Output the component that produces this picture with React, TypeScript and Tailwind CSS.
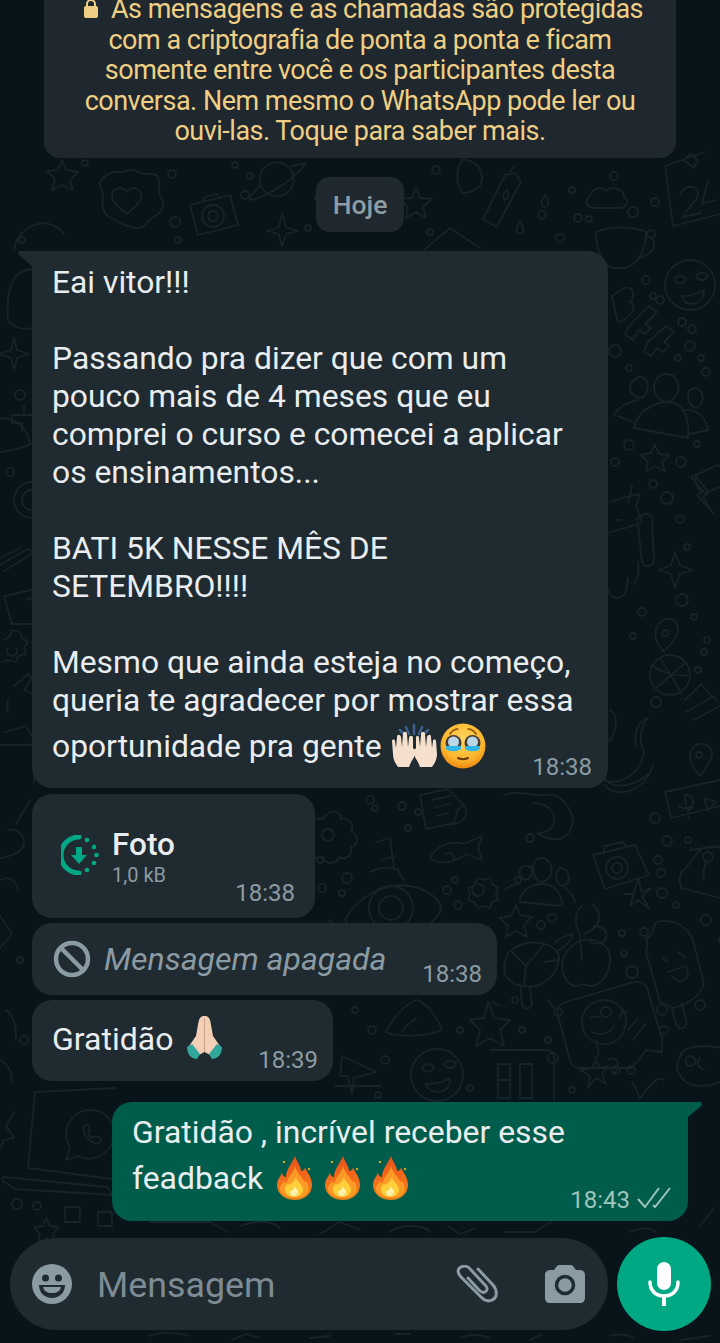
import React from "react";

const SANS = "font-['Roboto','Liberation_Sans',sans-serif]";

// small loose circles scattered between the doodles
const DOTS: [number, number, number][] = [
  [614, 176, 4], [655, 202, 4], [633, 212, 5], [651, 234, 4], [660, 300, 4], [646, 280, 4], [653, 296, 3],
  [682, 322, 4], [692, 329, 4], [690, 346, 5], [678, 358, 3], [701, 358, 3], [706, 372, 4], [629, 368, 3],
  [615, 351, 6], [629, 445, 5], [615, 462, 4], [681, 462, 5], [697, 444, 3], [653, 484, 4], [667, 498, 6],
  [680, 519, 4], [687, 547, 3], [642, 612, 4], [682, 600, 6], [694, 617, 3], [707, 640, 3], [633, 636, 3],
  [656, 702, 5], [704, 652, 3], [698, 670, 3], [655, 818, 5], [667, 841, 5], [688, 840, 3], [658, 860, 4],
  [661, 873, 4], [662, 893, 5], [676, 905, 3], [706, 920, 5], [722, 940, 3], [530, 838, 4], [552, 918, 4],
  [541, 925, 4], [622, 933, 3], [644, 932, 4], [624, 953, 3], [632, 972, 6], [662, 1010, 5], [664, 1030, 4],
  [700, 1005, 5], [558, 1012, 4], [522, 1030, 3], [548, 1040, 3], [553, 1058, 5], [616, 1070, 4], [631, 1070, 4],
  [572, 1090, 3], [22, 240, 3], [20, 395, 5], [10, 472, 4], [85, 163, 3], [172, 174, 4], [175, 222, 5],
  [178, 240, 3], [250, 176, 3], [245, 195, 4], [235, 165, 3], [318, 198, 3], [308, 228, 3], [430, 232, 3],
  [436, 170, 4], [542, 215, 4], [572, 190, 3], [578, 218, 4], [589, 219, 3], [560, 238, 4], [370, 800, 4],
  [375, 808, 3], [408, 828, 3], [402, 806, 4], [418, 812, 3], [322, 888, 4], [347, 878, 5], [342, 893, 3],
  [447, 890, 4], [455, 880, 3], [458, 905, 4], [518, 880, 3], [320, 860, 3], [372, 1030, 4], [385, 1060, 4],
  [460, 1030, 3], [515, 1000, 3], [470, 1088, 3], [24, 1040, 4], [20, 960, 3], [355, 1010, 3], [378, 1095, 3],
  [17, 1204, 5], [37, 1206, 4],
];

// doodle wallpaper, very faint strokes behind the chat
function Wallpaper() {
  return (
    <svg className="absolute inset-0 blur-[0.4px]" width="720" height="1343" viewBox="0 0 720 1343" fill="none" stroke="#182329" strokeWidth="1.8" strokeLinecap="round" strokeLinejoin="round">
      {DOTS.map(([cx, cy, r], i) => (
        <circle key={i} cx={cx} cy={cy} r={r} />
      ))}
      {/* top row */}
      <path d="M125 172c8-6 14 2 20 2s12-2 14 6-2 12 2 18 2 14-6 18-8 12-16 12-14-2-20-6-14-4-16-14 2-12-2-20 6-14 12-16z" />
      <path d="M127 192c6-8 16-2 14 6-1 6-8 10-14 16-6-6-14-10-15-16-1-8 9-14 15-6z" />
      <path d="M62 160l4 10 12 2-8 8 3 10-11-5-10 5 3-11-8-8 11-1z" />
      <path d="M264 168a17 17 0 1 1 24 24 17 17 0 0 1-24-24zM250 200c16-2 44-20 56-37-14 3-14 3-14 3M250 200c-2-2 6-10 10-14" />
      <path d="M190 205l40-10 8 30-40 10zM203 201l2-4 12-3 3 4" />
      <circle cx="213" cy="216" r="11" />
      <circle cx="213" cy="216" r="5" />
      <path d="M282 213l4 14 12 4-12 3-4 12-3-12-12-3 12-4z" />
      <path d="M416 187l4 11 12 1-9 8 3 11-10-6-10 6 2-11-8-8 12-1z" />
      <path d="M462 160a18 18 0 0 1 20 18c0 10-10 15-20 15-6-10-6-22 0-33z" />
      <path d="M505 175l10-2 6 8-24 46-14-8zM510 172l4-6" />
      <path d="M507 190c3 4 2 8-2 10-3-3-2-7 2-10z" />
      <path d="M590 196c2-8 12-10 16-5 6-6 18-2 18 6 6 4 2 12-6 11h-24c-8-1-10-8-4-12z" />
      <path d="M545 195c4 5 5 10 0 12-5-2-4-7 0-12zM520 222c4 5 5 10 0 12-5-2-4-7 0-12z" />
      <path d="M596 232c14-6 36-6 50 0 0 16-6 30-20 36h-14c-12-6-16-22-16-36zM646 238c8-4 10 6 6 12s-10 6-12 8" />
      <path d="M424 250l26-22 30 20" />
      <path d="M665 166l40-14M684 160l6-6 8 6-4 8zM665 166l8 60M673 226l47-12M680 195c4-12 20-10 18 0-1 6-10 12-15 22l18-4M708 180l-6 24 14-4" />
      <path d="M14 250c4-26 36-36 50-16" />
      {/* right column */}
      <circle cx="690" cy="285" r="25" />
      <path d="M674 280c2-5 9-5 12-1-2 5-8 7-12 1zM696 276c3-4 8-4 12-1-1 5-8 8-12 1zM682 296c8 0 16-2 22-6 0 8-4 14-12 14-6 0-10-4-10-8z" />
      <path d="M612 296l12-8c6-2 10 2 9 8 0 4-2 5-4 6 4 0 6 4 4 8-1 4-6 8-12 12l-4-2z" />
      <path d="M629 326l20-20 8 6-12 12 6 4-6 6-6-4-6 10-8-6zM648 342l18-16 8 6-10 10 5 4-6 6-6-4-6 8-7-4z" />
      <path d="M634 380c6-6 14-2 14 6 0 5-3 10-6 12-6 0-12-4-12-10 0-3 2-6 4-8zM666 374c10 0 14 8 12 18-2 6-8 10-12 10-8-2-12-8-12-16 0-6 6-12 12-12zM696 388c6 2 8 8 6 14-2 4-4 6-6 6-6-2-8-8-8-12 0-6 4-8 8-8z" />
      <path d="M634 428c2-14 18-26 34-26 16 0 22 18 20 36zM634 428l54 10M614 416c2-8 14-14 24-16M618 416l14 6M684 410c10-2 22 6 24 20l-18 4" />
      <path d="M655 445l4 9 10 1-7 7 3 9-10-5-9 5 2-9-7-7 10-2z" />
      <path d="M696 475l22-10 8 8M697 475c-4 8 0 14 8 18l20-8" />
      <path d="M610 502l20-6 10-2-4 12 6 16-16 6-16 4M632 486l-4 16M617 520h4M636 520l8-6c6-2 10 4 8 12l2 32c0 8-8 12-12 4l-4-36" />
      <path d="M608 590c2 10 14 10 18 2l2-14M634 584c4-4 6-14 4-22" />
      <path d="M675 552l5 13 12 5-12 4-5 14-4-14-12-4 12-5z" />
      <path d="M664 620c8-4 14 2 14 10s-8 14-14 22c-6-6-10-14-8-22 0-4 4-8 8-10z" />
      <circle cx="665" cy="633" r="3" />
      <path d="M695 475l14 18-6 4 10 16-16-18 6-4-12-14z" />
      {/* lower right */}
      <circle cx="670" cy="675" r="20" />
      <path d="M652 665c10 8 26 12 36 10M660 658l22 36M656 688l28-24" />
      <path d="M685 700l16-16 10 12 6 4M686 712l28-16M694 720l26-14" />
      <path d="M698 744c8-2 14 4 14 10 0 6-6 14-12 22-6-6-10-14-10-20 0-6 4-10 8-12z" />
      <circle cx="699" cy="755" r="3" />
      <path d="M665 792l55-12M665 792l6 26 49-12M685 795c6-2 8 4 8 10 0 5-6 6-7 2zM678 804c2 6 14 6 16-2M688 812l1 6M704 798l12 4-8 8z" />
      <path d="M610 710c10 6 6 26-4 34M606 744c-16 8-20 24-6 34 14 10 40 0 44-26M644 752c-4-8-6-22 4-34-12 4-14 18-12 28M604 778c10 14 34 6 44-4M605 785c10 14 40 8 48-20" />
      <path d="M504 795c18-6 28 2 40 0 14-2 22 6 28 20 4 14-8 24-14 24-8 0-14 0-20-6 8 0 14-4 16-10 2-10-6-20-20-20" />
      <path d="M593 855l42-10 14 30-44 14zM603 854l2-8 18-4 4 6" />
      <circle cx="617" cy="868" r="11" />
      <circle cx="617" cy="868" r="5" />
      <path d="M520 870c2-6 12-6 12 2 0 5-4 8-6 8-4 0-8-6-6-10zM541 858c8 0 12 8 10 16-1 4-6 8-10 8-6-2-8-8-8-14 0-6 4-10 8-10zM562 868c6 2 8 8 6 14-2 3-4 4-6 4-4-2-6-6-6-10s2-8 6-8z" />
      <path d="M520 902c0-10 10-18 22-18 12 0 20 8 20 22zM505 890c4-4 8-6 14-6M565 888c4 2 8 8 10 14" />
      <path d="M633 894l6-16 2 14 10-4-9 8 7 12-11-8-8 6 4-12-10 0z" />
      <path d="M690 850l30-4M681 872c6-2 14-20 22-24 6-2 12-2 17 0M681 888l39 10M682 888c-4-6-2-12 0-16M706 862c-3 8-3 14-2 18" />
      <circle cx="708" cy="857" r="5" />
      <path d="M582 960c-2-12 0-22-4-30-4-8-2-20 4-24M592 904c8 6 10 16 2 24-2 2-6 4-10 6M594 926c8 0 14 4 12 12-2 4-6 8-16 4" />
      <path d="M582 940c14-2 30 4 28 22-2 14-10 24-20 24-8-2-8-2-14 0-6 0-14-8-14-20 0-10 8-22 20-26z" />
      <path d="M509 952c8-8 24-12 36-8 8 2 14 8 14 14 0 10-10 26-24 28-14 2-26-2-30-12-2-6 0-16 4-22zM512 952l14 14 18-22M526 966l-2 20M544 962l14-2M555 942c4-4 10-6 18-8-2 6-6 12-14 16M520 984l2 20c0 6 10 6 10 0l-2-18M500 1006l-8-4M548 1000l6 8" />
      <path d="M656 922c16-4 34 4 38 22l10 40c-4 12-16 20-30 24l-14-6-14-50c2-6 2-10 0-14 4 0 6-4 10-16zM672 1008l4 16c4 8 12 4 10-4l-4-16" />
      <path d="M662 958l6 4M678 952l8 6M668 972c6-2 12-4 18-6l2 8c0 6-8 8-12 6l-4-4" />
      <path d="M566 1002l68-20c8-2 14 4 14 10l14 46 0 14-16-2-14 18-50 0c-8 0-10-2-12-8l-12-44c-2-8 2-12 8-14z" />
      <circle cx="604" cy="1022" r="22" />
      <path d="M590 1018c4-2 8-2 10 0M592 1032c8 4 18 2 22-6M621 1018c-2-6 2-8 6-6" />
      <circle cx="606" cy="1012" r="5" />
      <path d="M633 1040l12-16M628 1030l10-12" />
      <path d="M490 1050h56c6 0 8 4 8 8v42M498 1064v34M510 1064v34M498 1080h12M498 1064h12M498 1098h12M520 1064h12v34h-12z" />
      <path d="M596 1040c0 8 6 12 0 18" />
      <path d="M596 1060l-4 8-12 2 10 6-2 12 8-10 10 6-4-10 6-8-8 2z" />
      <path d="M680 1054c8-8 24-10 40-6M682 1054c-8 10-6 20 4 28 10 6 24 4 34 0M704 1070c-6-2-8-8-4-12M690 1066a5 5 0 1 1 1 0" />
      <path d="M608 1060c6-4 10 0 10 4 0 4-2 8-4 10M640 1098c12-16 18-22 24-18M632 1082c4 6 6 12 8 16" />
      {/* middle, next to the short bubbles */}
      <path d="M327 815c4-6 14-4 14 4 8-2 14 6 10 12 8 4 8 14 0 16 2 8-6 14-12 10-2 8-14 8-16 0-8 4-14-4-12-10-8-2-8-14 0-16-4-8 4-14 12-12 0-2 2-4 4-4z" />
      <circle cx="328" cy="835" r="6" />
      <path d="M420 795l28-6 16 16-6 4-4 14-28 6zM432 800l18-4M434 808l16-4M436 816l12-3M464 805c4 6 2 16-6 18l-8 2" />
      <path d="M430 858c6-12 20-18 34-14l18-8-4 12 4 12-16-6c-10 8-26 12-36 4zM446 854c4-2 8 0 8 4" />
      <path d="M376 842l14-4 4 30M382 860l14-4M370 872c6-4 20-6 28-2l6 10M346 918c12-22 40-36 64-32 22 4 34 18 30 26-10 18-46 36-70 32-16-4-26-14-24-26z" />
      <circle cx="391" cy="908" r="22" />
      <circle cx="391" cy="908" r="12" />
      <path d="M331 938l8 12 8-8M329 920l10 10" />
      <path d="M478 878l6 2 6-2 2 6 6 4-2 6 2 6-6 2-2 6-6-2-6 2-4-6-6-2 2-6-2-6 6-2z" />
      <circle cx="478" cy="890" r="6" />
      <path d="M516 905l4 10 12 2-8 8 3 12-11-6-10 6 2-11-8-8 11-2z" />
      <path d="M386 1032c8-16 20-28 30-32 10 2 22 18 26 30-12 6-44 8-56 2zM402 1032c4-8 8-8 14-14" />
      <path d="M342 1056l34 16-22 6-2 16-4-18-8 0z" />
      <circle cx="437" cy="1075" r="26" />
      <path d="M422 1068c2-5 9-5 12-1-2 5-8 7-12 1zM444 1064c3-4 8-4 12-1-1 5-8 8-12 1zM426 1084c8 0 18-2 24-6 0 8-4 14-12 14-6 0-12-4-12-8z" />
      <path d="M488 1002l6 16 16 2-10 10 4 16-14-8-14 8 4-16-10-10 14-2z" />
      <path d="M335 1086h46" />
      {/* left column */}
      <path d="M18 275c6-6 18-8 24-4M8 320c-2-20 2-40 10-46M8 320c4 8 16 10 26 8" />
      <path d="M14 338l3 12 12 4-12 4-3 12-3-12-12-4 12-4z" />
      <path d="M24 405v10h8M24 415H12v8h10v8" />
      <path d="M0 452c14-2 24-4 30-8-2-14-12-26-30-26" />
      <circle cx="32" cy="500" r="18" />
      <circle cx="32" cy="500" r="10" />
      <path d="M0 565l24-14c6-4 8 0 6 4l-26 16M0 558l20-10" />
      <path d="M4 596l28-6M4 596l8 28h20M26 600c10-4 10 0 10 6" />
      <path d="M4 640l6-4 2-6 8 2 2 6 6 4-4 6 2 6-8 2-2 6-8-2-6 2M8 648a5 5 0 1 0 8 0" />
      <path d="M14 686l14-12 4 4-8 12 8 4" />
      <path d="M4 732l22-6 8 14v44M0 745h32M8 700c-2 6 0 10 0 12" />
      <path d="M30 800l-14 24M8 830c10-2 16 6 16 12 0 8-10 14-24 16" />
      <path d="M0 880c10-4 16 0 18 10M0 916l12 18-12 14M6 1010c10 8 10 18 10 30M0 1060c8 4 12 12 12 22" />
      {/* bottom left: laptop with the WhatsApp mark on the screen */}
      <path d="M35 1092l-7 76 92 12M35 1092l80-4M3 1177l104 10 6 8-98-6-12-8z" />
      <path d="M90 1110c-14 0-24 12-24 24 0 6 2 10 4 14l-4 12 12-4c16 8 36-4 36-22 0-14-10-24-24-24zM84 1126c-2 6 2 14 12 18 4 0 6-4 4-6l-6-2-2 2c-2-2-4-4-4-6l2-2-2-6z" />
      <path d="M14 1112l-8 14 8 12-10 2-4 8" />
      <path d="M65 1207h15v15H65zM98 1212h14v14H98zM46 1218l4 8 9 1-6 7 2 9-9-4-8 4 2-9-6-7 9-1z" />
      <path d="M150 1222h60l18 10M240 1226c20-6 30-6 40 2M320 1234l20-12 20 8M390 1232c10-8 34-8 40 0M448 1226l12 8 16-6M505 1232h30l16-10M630 1232c10-4 20-6 26 0M700 1226l14-18" />
      <path d="M150 1336c10-4 24-4 40 0M232 1340l14-6 14 4M310 1338l20-2M396 1334h14M460 1338c10-4 18-4 30 0M530 1340l12-6M610 1336c6-2 16-2 24 2M680 1340l30-4" />
    </svg>
  );
}

function IncomingTail() {
  return (
    <svg className="absolute left-[-14px] top-0" width="20" height="20" viewBox="0 0 20 20">
      <path d="M20 0H3C0 0-1 2 1 4l19 16z" fill="#1f2a31" />
    </svg>
  );
}

function OutgoingTail() {
  return (
    <svg className="absolute right-[-14px] top-0" width="20" height="20" viewBox="0 0 20 20">
      <path d="M0 0h17c3 0 4 2 2 4L0 20z" fill="#005c4b" />
    </svg>
  );
}

function RaisedHands() {
  return (
    <svg width="48" height="44" viewBox="0 0 48 44">
      <path d="M24 1v9M16 3l3 7M32 3l-3 7M10 6l5 5M38 6l-5 5" stroke="#3c5f8c" strokeWidth="2.500" strokeLinecap="round" />
      <path d="M2 17c0-2 3-2 3 0l1 7 1-11c0-3 3-3 4 0l1 10 1-13c0-3 4-3 4 0l1 13 1-9c0-3 4-3 4 0l0 13 2-2c2-2 3 0 2 2l-4 8c-2 3-3 5-4 8H8c-3-4-5-8-5-13z" fill="#f4e0cc" />
      <path d="M46 17c0-2-3-2-3 0l-1 7-1-11c0-3-3-3-4 0l-1 10-1-13c0-3-4-3-4 0l-1 13-1-9c0-3-3-3-3 0l0 13-2-2c-1-2-3 0-2 2l4 8c2 3 3 5 4 8h12c3-4 5-8 5-13z" fill="#f4e0cc" />
    </svg>
  );
}

function TearsFace() {
  return (
    <svg width="46" height="46" viewBox="0 0 46 46">
      <defs>
        <radialGradient id="face" cx="50%" cy="35%" r="65%">
          <stop offset="0%" stopColor="#ffd75e" />
          <stop offset="70%" stopColor="#fbb62d" />
          <stop offset="100%" stopColor="#ec8a12" />
        </radialGradient>
      </defs>
      <circle cx="23" cy="23" r="22.500" fill="url(#face)" />
      <path d="M10 11c2-3 5-5 8-5M36 11c-2-3-5-5-8-5" stroke="#8a4e12" strokeWidth="1.600" fill="none" strokeLinecap="round" />
      <circle cx="13.500" cy="20" r="8" fill="#4a3a34" />
      <circle cx="32.500" cy="20" r="8" fill="#4a3a34" />
      <circle cx="13.500" cy="19" r="5.500" fill="#b9d6e4" />
      <circle cx="32.500" cy="19" r="5.500" fill="#b9d6e4" />
      <path d="M6 23h15v3c-4 3-11 3-15 0zM25 23h15v3c-4 3-11 3-15 0z" fill="#2fb6e8" />
      <path d="M18 35c3 1.500 7 1.500 10 0" stroke="#6b3d10" strokeWidth="2" fill="none" strokeLinecap="round" />
    </svg>
  );
}

function Praying() {
  return (
    <svg width="35" height="43" viewBox="0 0 35 43">
      <path d="M17.500 0c3.500 0 5.500 2 6 6L26 20l7 10-8 10-7.500-4L10 40 2 30l7-10 2.500-14c.5-4 2.500-6 6-6z" fill="#f3cfb6" />
      <path d="M17.500 2v34" stroke="#c9a08a" strokeWidth="1" />
      <path d="M0 31l5-3 8 10-3 5C4 43 0 38 0 31zM35 31l-5-3-8 10 3 5c6 0 10-5 10-12z" fill="#2fa79a" />
    </svg>
  );
}

function Fire() {
  return (
    <svg width="35" height="44" viewBox="0 0 35 44">
      <defs>
        <linearGradient id="flame" x1="0" y1="0" x2="0" y2="1">
          <stop offset="0%" stopColor="#e8501c" />
          <stop offset="60%" stopColor="#f5701c" />
          <stop offset="100%" stopColor="#e2811a" />
        </linearGradient>
      </defs>
      <path d="M18 0c2 6 6 10 6 15 2 0 3-1 4-3 3 5 7 10 7 17 0 9-8 15-17 15C8 44 0 38 0 29c0-5 3-8 5-12 1 3 2 4 4 4 0-8 6-13 9-21z" fill="url(#flame)" />
      <path d="M18 10c1 6 6 9 8 14 1 2 2 2 3 1 2 3 3 5 3 8 0 6-7 9-14 9S3 39 3 33c0-3 2-6 4-8 1 2 2 2 3 1 1-6 7-9 8-16z" fill="#fb9a24" />
      <path d="M19 21c1 5 6 7 7 12 0 5-4 8-9 8s-9-3-9-8c0-2 1-4 3-5 1 1 2 1 3 0 1-2 4-4 5-7z" fill="#fdd03b" />
      <path d="M18 31c2 2 4 4 3 6-1 2-2 3-4 3s-4-1-4-3c0-2 3-3 5-6z" fill="#fff0b0" />
      <circle cx="7" cy="6" r="1.300" fill="#c9a227" />
      <circle cx="32" cy="13" r="1.300" fill="#c9a227" />
    </svg>
  );
}

function Time({ children, className }: { children: React.ReactNode; className: string }) {
  return <span className={`absolute text-[24px] leading-none text-[#8b9ba3] ${className}`}>{children}</span>;
}

export default function App() {
  return (
    <div className={`relative h-[1343px] w-[720px] overflow-hidden bg-[#08131a] ${SANS}`}>
      <Wallpaper />
      <div className="relative flex flex-col">
        {/* encryption notice, scrolled partly off the top */}
        <div className="mx-[44px] mt-[-8px] h-[166px] rounded-b-[16px] bg-[#1e282e] pt-[2px] text-center text-[27px] leading-[30.500px] tracking-[-0.500px] text-[#f0cf85]">
          <p>
            <svg className="ml-[6px] mr-[12px] inline-block align-[-1px]" width="16" height="20" viewBox="0 0 16 20">
              <path d="M4 8V5a4 4 0 0 1 8 0v3" stroke="#f0cf85" strokeWidth="2" fill="none" />
              <rect x="1" y="7" width="14" height="12" rx="2" fill="#f0cf85" />
            </svg>
            As mensagens e as chamadas são protegidas
            <br />
            com a criptografia de ponta a ponta e ficam
            <br />
            somente entre você e os participantes desta
            <br />
            conversa. Nem mesmo o WhatsApp pode ler ou
            <br />
            ouvi-las. Toque para saber mais.
          </p>
        </div>

        <div className="mt-[19px] flex justify-center">
          <span className="flex h-[55px] w-[88px] items-center justify-center rounded-[14px] bg-[#1e282e] text-[26.500px] font-medium text-[#8d9ca5]">
            Hoje
          </span>
        </div>

        {/* long incoming message */}
        <div className="relative ml-[32px] mt-[19px] h-[537px] w-[576px] rounded-[20px] rounded-tl-none bg-[#1f2a31] pl-[20px] pt-[12px] text-[31.800px] leading-[38px] text-[#e9edef]">
          <IncomingTail />
          <p>Eai vitor!!!</p>
          <p className="mt-[38px]">
            Passando pra dizer que com um
            <br />
            pouco mais de 4 meses que eu
            <br />
            comprei o curso e comecei a aplicar
            <br />
            os ensinamentos...
          </p>
          <p className="mt-[38px]">
            BATI 5K NESSE MÊS DE
            <br />
            SETEMBRO!!!!
          </p>
          <p className="mt-[38px]">
            Mesmo que ainda esteja no começo,
            <br />
            queria te agradecer por mostrar essa
          </p>
          <div className="mt-[4px] flex items-center">
            <span>oportunidade pra gente</span>
            <span className="ml-[8px] flex items-center gap-[2px]">
              <RaisedHands />
              <TearsFace />
            </span>
          </div>
          <Time className="bottom-[9px] right-[16px]">18:38</Time>
        </div>

        {/* photo placeholder */}
        <div className="relative ml-[32px] mt-[6px] flex h-[124px] w-[283px] rounded-[20px] bg-[#1f2a31] pl-[29px] pt-[36px]">
          <svg className="mt-[5px]" width="38" height="40" viewBox="0 0 38 40">
            <path d="M18 2a18 18 0 0 0 0 36" stroke="#00a884" strokeWidth="5" fill="none" strokeLinecap="round" />
            <circle cx="26" cy="5" r="2.300" fill="#00a884" />
            <circle cx="33" cy="12" r="2.300" fill="#00a884" />
            <circle cx="35.500" cy="20" r="2.300" fill="#00a884" />
            <circle cx="33" cy="28" r="2.300" fill="#00a884" />
            <circle cx="26" cy="35" r="2.300" fill="#00a884" />
            <path d="M15 12h6v8h5l-8 9-8-9h5z" fill="#00a884" />
          </svg>
          <div className="ml-[13px]">
            <p className="text-[31.500px] font-medium leading-[30px] text-[#e9edef]">Foto</p>
            <p className="mt-[5px] text-[20px] leading-[20px] text-[#8b9ba3]">1,0 kB</p>
          </div>
          <Time className="bottom-[13px] right-[20px]">18:38</Time>
        </div>

        {/* deleted message */}
        <div className="relative ml-[32px] mt-[5px] flex h-[72px] w-[465px] items-center rounded-[20px] bg-[#1f2a31] pl-[21px]">
          <svg width="38" height="38" viewBox="0 0 38 38" fill="none" stroke="#8b9ba3" strokeWidth="4.500">
            <circle cx="19" cy="19" r="16" />
            <path d="M8 8l22 22" />
          </svg>
          <span className="ml-[13px] text-[32px] italic text-[#8b9ba3]">Mensagem apagada</span>
          <Time className="bottom-[9px] right-[15px]">18:38</Time>
        </div>

        {/* short incoming message */}
        <div className="relative ml-[32px] mt-[5px] flex h-[81px] w-[301px] items-start rounded-[20px] bg-[#1f2a31] pl-[20px] pt-[20px]">
          <span className="text-[32px] leading-[38px] text-[#e9edef]">Gratidão</span>
          <span className="ml-[14px] mt-[-4px]">
            <Praying />
          </span>
          <Time className="bottom-[9px] right-[15px]">18:39</Time>
        </div>

        {/* outgoing reply */}
        <div className="relative ml-[112px] mt-[21px] h-[119px] w-[576px] rounded-[20px] rounded-tr-none bg-[#005c4b] pl-[20px] pt-[11px] text-[31.900px] leading-[38px] text-[#e9edef]">
          <OutgoingTail />
          <p>Gratidão , incrível receber esse</p>
          <div className="mt-[5px] flex items-center">
            <span>feadback</span>
            <span className="ml-[14px] flex gap-[13px]">
              <Fire />
              <Fire />
              <Fire />
            </span>
          </div>
          <span className="absolute bottom-[9px] right-[58px] text-[24px] leading-none text-[#9fc4bb]">18:43</span>
          <svg className="absolute bottom-[11px] right-[17px]" width="34" height="24" viewBox="0 0 34 24" fill="none" stroke="#9fc4bb" strokeWidth="2">
            <path d="M1 13l7 8L22 2M16 19l2 2L33 2" />
          </svg>
        </div>

        {/* input bar */}
        <div className="mt-[16px] flex items-center pl-[10px]">
          <div className="flex h-[92px] w-[598px] items-center rounded-[46px] bg-[#1f2a31] pl-[22px] pr-[23px]">
            <svg width="40" height="40" viewBox="0 0 40 40">
              <circle cx="20" cy="20" r="20" fill="#8b9ba3" />
              <circle cx="13.500" cy="14" r="3.500" fill="#1f2a31" />
              <circle cx="26.500" cy="14" r="3.500" fill="#1f2a31" />
              <path d="M7 21h26c0 8-6 13-13 13S7 29 7 21z" fill="#1f2a31" />
              <path d="M11 23h18c-1 4-4 6-9 6s-8-2-9-6z" fill="#8b9ba3" />
            </svg>
            <span className="ml-[25px] mt-[3px] text-[35.800px] leading-none text-[#7d8c94]">Mensagem</span>
            <svg className="ml-auto" width="42" height="38" viewBox="0 0 42 38" fill="none" stroke="#8b9ba3" strokeWidth="3" strokeLinecap="round" strokeLinejoin="round">
              <path d="M22 4l15 16c5 6 4 13-1 15-4 2-8 0-11-3L6 13C1 8 1 4 5 2c4-2 8 0 10 3l15 16c2 3 1 5-1 6-2 1-4 0-6-2L12 13" />
            </svg>
            <svg className="ml-[47px]" width="40" height="38" viewBox="0 0 40 38">
              <path d="M12 1c1-1 2-1 3-1h10c1 0 2 0 3 1l3 4h4c3 0 5 2 5 5v23c0 3-2 5-5 5H5c-3 0-5-2-5-5V10c0-3 2-5 5-5h4z" fill="#8b9ba3" />
              <circle cx="20" cy="20" r="8.500" fill="none" stroke="#1f2a31" strokeWidth="3.500" />
            </svg>
          </div>
          <div className="ml-[9px] flex h-[94px] w-[94px] items-center justify-center rounded-full bg-[#00a884]">
            <svg width="34" height="44" viewBox="0 0 34 44" fill="#fff">
              <rect x="10" y="0" width="14" height="28" rx="7" />
              <path d="M3 20c0 9 6 14 14 14s14-5 14-14" fill="none" stroke="#fff" strokeWidth="3.500" strokeLinecap="round" />
              <rect x="15" y="33" width="4" height="11" />
            </svg>
          </div>
        </div>
      </div>
    </div>
  );
}
